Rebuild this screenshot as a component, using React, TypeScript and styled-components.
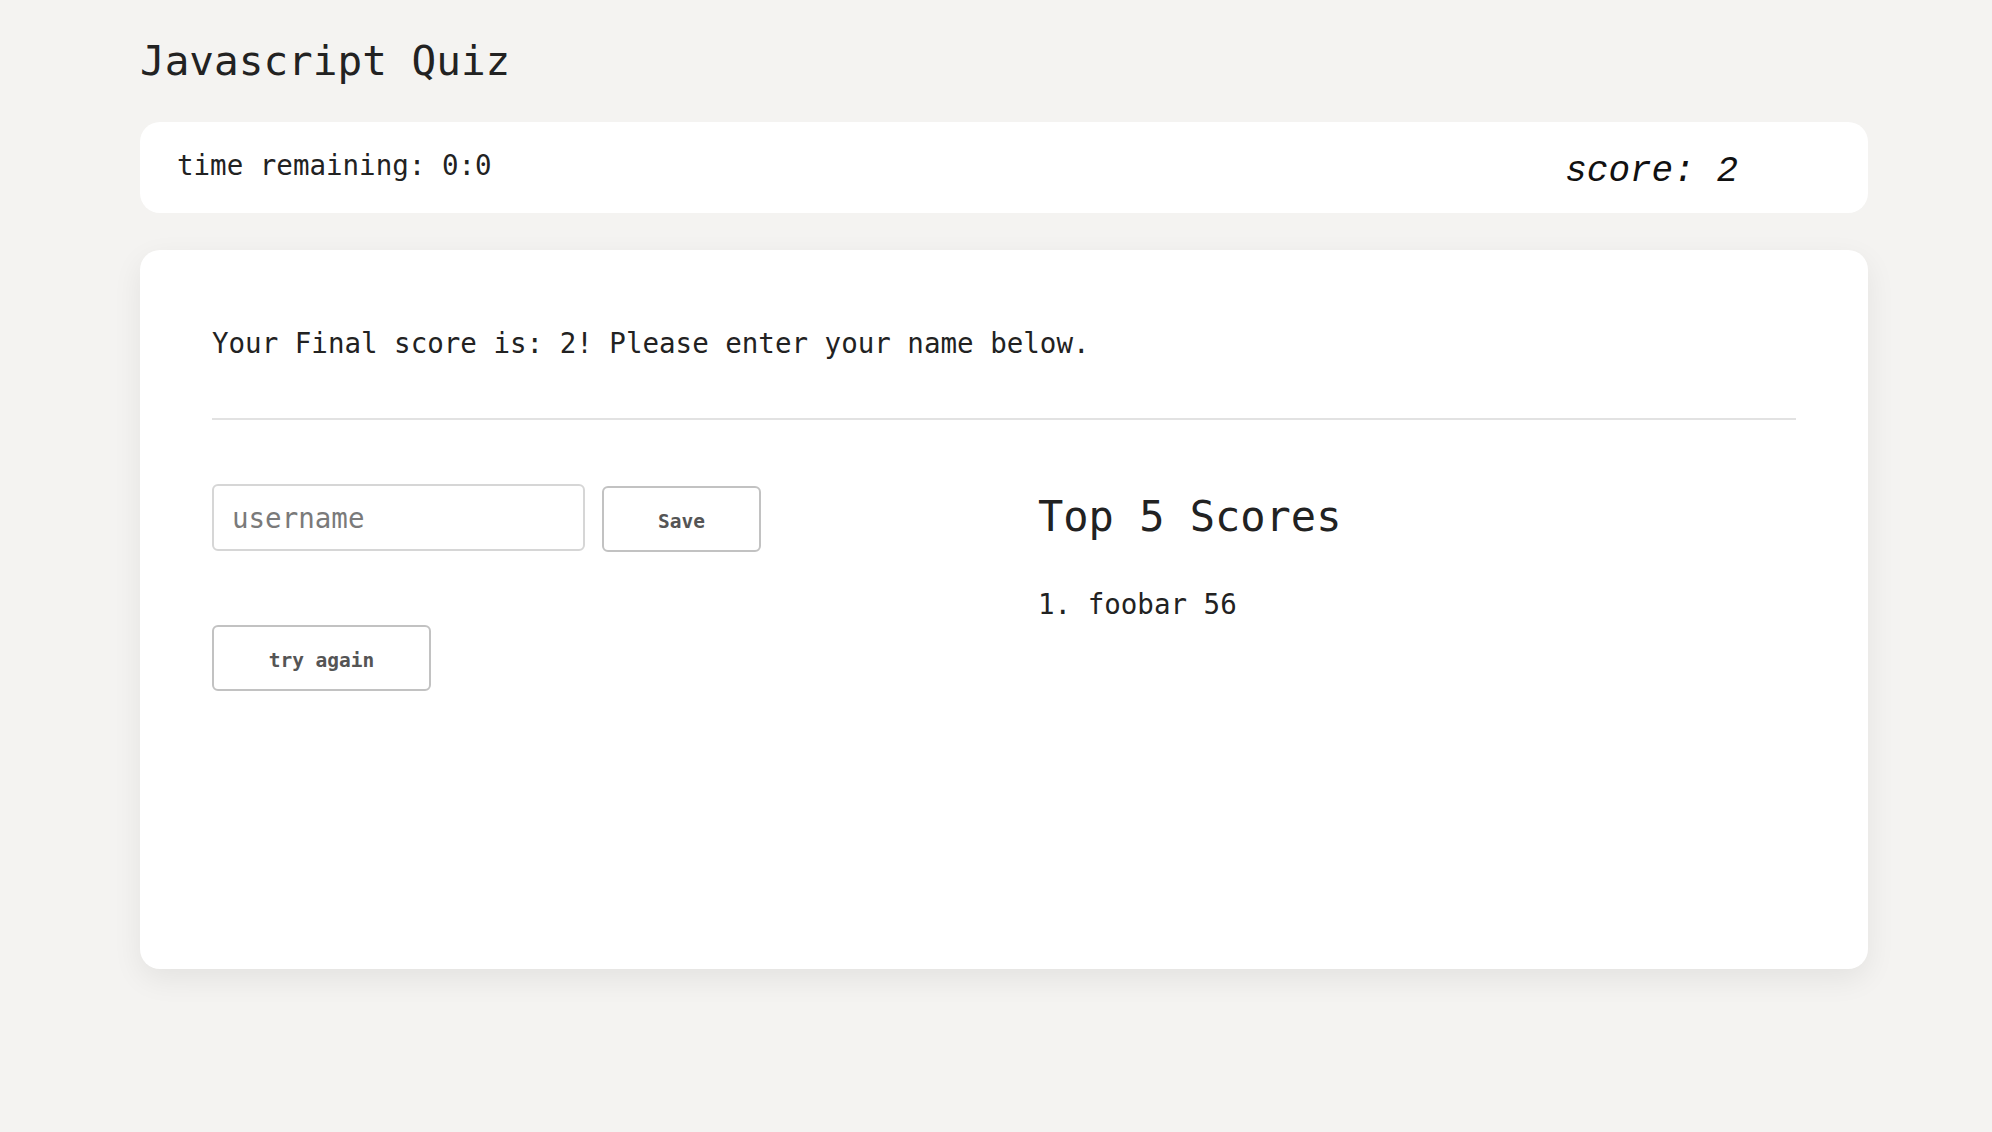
import React from "react";
import styled, { createGlobalStyle } from "styled-components";

const GlobalStyle = createGlobalStyle`
  html, body {
    margin: 0;
    padding: 0;
    background: #f4f3f1;
  }
  body {
    font-family: "DejaVu Sans Mono", "Liberation Mono", monospace;
    color: #222222;
  }
  * { box-sizing: border-box; }
`;

const Page = styled.main`
  padding: 41px 0 80px 140px;
  width: 1868px;
`;

const Title = styled.h1`
  margin: 0 0 41px;
  font-size: 41px;
  line-height: 40px;
  font-weight: 400;
  color: #222222;
`;

const StatusBar = styled.header`
  display: flex;
  justify-content: space-between;
  align-items: flex-start;
  height: 91px;
  padding: 0 130px 0 37px;
  background: #ffffff;
  border-radius: 20px;
  margin-bottom: 37px;
`;

const Timer = styled.div`
  margin-top: 26.5px;
  font-size: 27.5px;
  line-height: 32px;
  color: #222222;
`;

const Score = styled.div`
  margin-top: 30.4px;
  font-family: "Liberation Mono", monospace;
  font-style: italic;
  font-size: 36px;
  line-height: 40px;
  color: #111111;
`;

const Card = styled.section`
  min-height: 719px;
  background: #ffffff;
  border-radius: 20px;
  padding: 76.5px 72px 40px;
  box-shadow: 0 10px 30px rgba(0, 0, 0, 0.07);
`;

const Message = styled.p`
  margin: 0;
  font-size: 27.5px;
  line-height: 32px;
`;

const Divider = styled.hr`
  margin: 59.5px 0 64px;
  border: none;
  height: 2px;
  background: #e2e2e2;
`;

const Columns = styled.div`
  display: grid;
  grid-template-columns: 1fr 1fr;
  column-gap: 68px;
  align-items: start;
`;

const LeftColumn = styled.div`
  display: flex;
  flex-direction: column;
  align-items: flex-start;
  gap: 73px;
`;

const SaveRow = styled.form`
  display: flex;
  align-items: flex-start;
  gap: 17px;
  margin: 0;
`;

const NameInput = styled.input`
  width: 373px;
  height: 67px;
  padding: 0 18px;
  border: 2px solid #d6d6d6;
  border-radius: 6px;
  font-family: "DejaVu Sans Mono", "Liberation Mono", monospace;
  font-size: 27.5px;
  color: #222222;
  background: #ffffff;
  outline: none;
  &::placeholder {
    color: #7a7a7a;
  }
`;

const Button = styled.button<{ $width: number; $offset?: number }>`
  width: ${(p) => p.$width}px;
  height: 66px;
  margin-top: ${(p) => p.$offset ?? 0}px;
  border: 2px solid #c2c2c2;
  border-radius: 6px;
  background: #ffffff;
  font-family: "DejaVu Sans Mono", "Liberation Mono", monospace;
  font-weight: 700;
  font-size: 19.5px;
  color: #555555;
  cursor: pointer;
  padding: 5px 0 0;
`;

const RightColumn = styled.div`
  padding-top: 9px;
`;

const ScoresTitle = styled.h2`
  margin: 0 0 47px;
  font-size: 42px;
  line-height: 48px;
  font-weight: 400;
  color: #222222;
`;

const ScoreList = styled.ol`
  list-style: none;
  margin: 0;
  padding: 0;
`;

const ScoreItem = styled.li`
  font-size: 27.5px;
  line-height: 32px;
  color: #222222;
`;

const topScores = [{ name: "foobar", score: 56 }];

export default function App() {
  return (
    <>
      <GlobalStyle />
      <Page>
        <Title>Javascript Quiz</Title>
        <StatusBar>
          <Timer>time remaining: 0:0</Timer>
          <Score>score: 2</Score>
        </StatusBar>
        <Card>
          <Message>Your Final score is: 2! Please enter your name below.</Message>
          <Divider />
          <Columns>
            <LeftColumn>
              <SaveRow onSubmit={(e) => e.preventDefault()}>
                <NameInput placeholder="username" />
                <Button type="submit" $width={159} $offset={2}>
                  Save
                </Button>
              </SaveRow>
              <Button type="button" $width={219}>
                try again
              </Button>
            </LeftColumn>
            <RightColumn>
              <ScoresTitle>Top 5 Scores</ScoresTitle>
              <ScoreList>
                {topScores.map((s, i) => (
                  <ScoreItem key={s.name}>
                    {i + 1}. {s.name} {s.score}
                  </ScoreItem>
                ))}
              </ScoreList>
            </RightColumn>
          </Columns>
        </Card>
      </Page>
    </>
  );
}
